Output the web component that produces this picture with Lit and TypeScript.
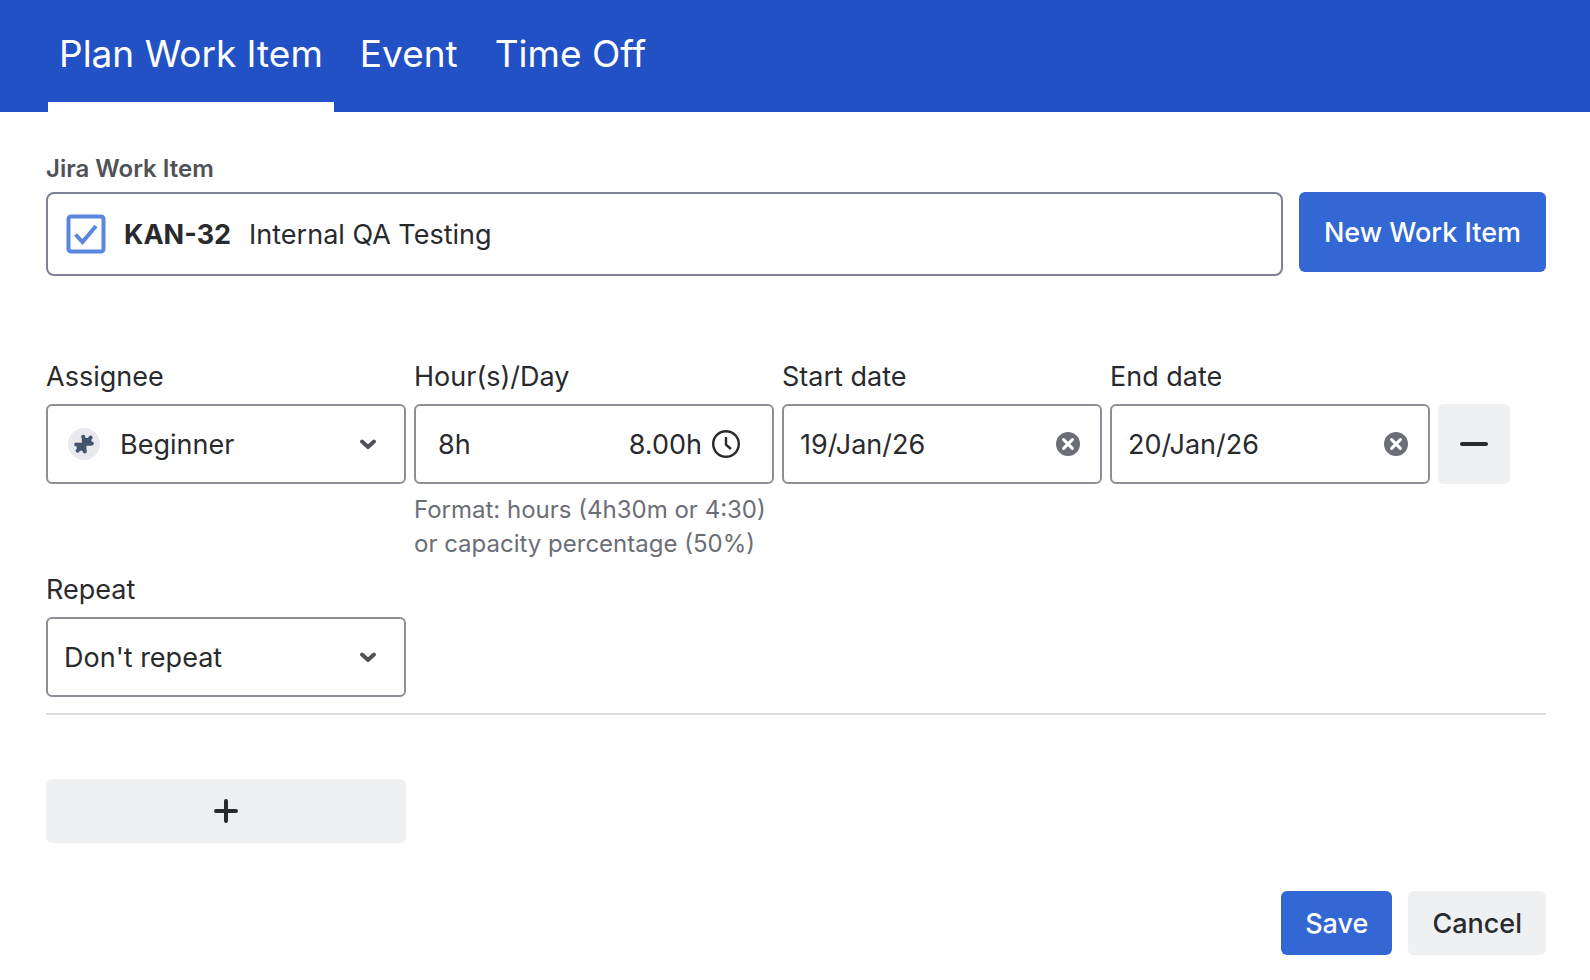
import { LitElement, html, css, svg } from "lit";
import { customElement, state } from "lit/decorators.js";

const taskIcon = html`<svg class="task-icon" viewBox="0 0 40 40" aria-hidden="true">
  <rect x="2.5" y="2.5" width="35" height="35" rx="2.5" fill="#fff" stroke="#5b86df" stroke-width="4" />
  <path d="M9.5 20.5 L16.5 28 L30 12" fill="none" stroke="#5b86df" stroke-width="4" />
</svg>`;

const chevron = html`<svg class="chevron" viewBox="0 0 20 20" aria-hidden="true">
  <path d="M4 7.5 L10 13 L16 7.5" fill="none" stroke="#505258" stroke-width="4" stroke-linecap="round" stroke-linejoin="round" />
</svg>`;

const knobs = [
  [15.2, 8.8], [22.6, 9.4], [23.8, 15.6], [8.2, 16.6], [9.6, 22.8], [16.8, 23.4],
];

const avatar = html`<svg class="avatar" viewBox="0 0 32 32" aria-hidden="true">
  <circle cx="16" cy="16" r="16" fill="#e8eaef" />
  <g fill="#44546f">
    <path d="M13.8 9.4 H23.4 V17.8 H18.4 V23.2 H8.8 V14.8 H13.8 Z" />
    ${knobs.map(([x, y]) => svg`<circle cx=${x} cy=${y} r="2" />`)}
  </g>
  <g fill="#e8eaef">
    <circle cx="19" cy="8.8" r="1.2" />
    <circle cx="13.2" cy="23.8" r="1.2" />
  </g>
</svg>`;

const clock = html`<svg class="clock" viewBox="0 0 28 28" aria-hidden="true">
  <g fill="none" stroke="#292a2e" stroke-width="2.4">
    <circle cx="14" cy="14" r="12.8" />
    <path d="M14 7 V14.6 L19 19" />
  </g>
</svg>`;

const clear = html`<svg class="clear-icon" viewBox="0 0 24 24" aria-hidden="true">
  <circle cx="12" cy="12" r="12" fill="#6b6e76" />
  <path d="M7.6 7.6 L16.4 16.4 M16.4 7.6 L7.6 16.4" stroke="#fff" stroke-width="3" stroke-linecap="round" />
</svg>`;

const minus = html`<svg class="glyph" viewBox="0 0 28 28" aria-hidden="true">
  <path d="M2 14 H26" stroke="#292a2e" stroke-width="4" stroke-linecap="round" />
</svg>`;

const plus = html`<svg class="glyph" viewBox="0 0 28 28" aria-hidden="true">
  <path d="M4 14 H24 M14 4 V24" stroke="#292a2e" stroke-width="4" stroke-linecap="round" />
</svg>`;

@customElement("app-root")
export class AppRoot extends LitElement {
  static styles = css`
    :host {
      display: block;
      min-height: 100vh;
      background: #fff;
      color: #292a2e;
      font: 400 27px/40px Inter, "Liberation Sans", sans-serif;
    }
    * {
      box-sizing: border-box;
    }
    button,
    input,
    select {
      margin: 0;
      font: inherit;
      color: inherit;
    }
    button {
      border: 0;
      border-radius: 6px;
      cursor: pointer;
    }
    svg {
      display: block;
      flex: none;
    }
    .tabs {
      display: flex;
      gap: 15px;
      padding: 0 48px;
      background: #2251c5;
    }
    .tab {
      padding: 30px 11px 24px;
      border-bottom: 10px solid transparent;
      border-radius: 0;
      background: none;
      color: #fff;
      font-size: 37px;
      line-height: 48px;
    }
    .tab.active {
      border-bottom-color: #fff;
    }
    .form {
      padding: 40px 44px 24px 46px;
    }
    .caption {
      display: block;
      margin-bottom: 6px;
      color: #505258;
      font-size: 24px;
      font-weight: 600;
      line-height: 34px;
    }
    .issue-row {
      display: flex;
      align-items: flex-start;
      gap: 16px;
      margin-bottom: 80px;
    }
    .issue {
      flex: 1;
      display: flex;
      align-items: center;
      gap: 18px;
      height: 84px;
      padding: 0 18px;
      border: 2px solid #7d8298;
      border-radius: 8px;
      background: #fff;
      text-align: left;
    }
    .issue-key,
    .issue-name {
      padding-top: 2px;
    }
    .issue-key {
      font-weight: 700;
    }
    .task-icon {
      width: 40px;
      height: 40px;
    }
    .btn {
      height: 64px;
      padding: 2px 24px 0;
      background: #eff0f2;
      font-weight: 500;
    }
    .btn.primary {
      background: #3267d4;
      color: #fff;
    }
    .btn.tall {
      height: 80px;
      padding: 2px 25px 0;
    }
    .fields {
      display: flex;
      align-items: flex-start;
      gap: 8px;
    }
    .field {
      width: 320px;
    }
    .field.wide {
      width: 360px;
    }
    .label {
      display: block;
      margin-bottom: 6px;
      line-height: 42px;
    }
    .control {
      display: flex;
      align-items: center;
      height: 80px;
      padding: 0 16px;
      border: 2px solid #8c8f97;
      border-radius: 6px;
    }
    .control input {
      flex: 1;
      min-width: 0;
      padding: 2px 0 0;
      border: 0;
      background: none;
    }
    .control.hours {
      gap: 10px;
      padding: 0 32px 0 22px;
    }
    .total {
      padding-top: 2px;
    }
    .picker {
      display: grid;
      align-items: center;
      height: 80px;
    }
    .picker > * {
      grid-area: 1 / 1;
    }
    .picker select {
      width: 100%;
      height: 100%;
      padding: 2px 56px 0 16px;
      border: 2px solid #8c8f97;
      border-radius: 6px;
      background: #fff;
      appearance: none;
    }
    .picker.with-avatar select {
      padding-left: 72px;
    }
    .avatar {
      width: 32px;
      height: 32px;
      margin-left: 22px;
      pointer-events: none;
    }
    .chevron {
      justify-self: end;
      width: 20px;
      height: 20px;
      margin-right: 28px;
      pointer-events: none;
    }
    .clock {
      width: 28px;
      height: 28px;
    }
    .clear {
      padding: 4px;
      background: none;
    }
    .clear-icon {
      width: 24px;
      height: 24px;
    }
    .glyph {
      width: 28px;
      height: 28px;
    }
    .hint {
      margin: 9px 0 8px;
      color: #6b6e76;
      font-size: 24px;
      line-height: 34px;
      white-space: nowrap;
    }
    .icon-btn {
      display: flex;
      align-items: center;
      justify-content: center;
      background: #eff0f2;
    }
    .remove {
      width: 72px;
      height: 80px;
      margin-top: 48px;
      padding: 0;
    }
    .divider {
      margin: 16px 0 64px;
      border: 0;
      border-top: 2px solid #dddee1;
    }
    .add {
      width: 360px;
      height: 64px;
    }
    .footer {
      display: flex;
      justify-content: flex-end;
      gap: 16px;
      margin-top: 48px;
    }
  `;

  @state() private activeTab = "Plan Work Item";

  private tabs = ["Plan Work Item", "Event", "Time Off"];

  private dateField(id: string, label: string, value: string) {
    return html`<div class="field">
      <label class="label" for=${id}>${label}</label>
      <div class="control">
        <input id=${id} type="text" .value=${value} />
        <button class="clear" type="button" aria-label="Clear">${clear}</button>
      </div>
    </div>`;
  }

  render() {
    return html`
      <div class="tabs" role="tablist">
        ${this.tabs.map(
          (tab) => html`<button
            class="tab ${tab === this.activeTab ? "active" : ""}"
            type="button"
            role="tab"
            aria-selected=${tab === this.activeTab}
            @click=${() => (this.activeTab = tab)}
          >${tab}</button>`
        )}
      </div>
      <form class="form" @submit=${(e: Event) => e.preventDefault()}>
        <label class="caption" for="issue">Jira Work Item</label>
        <div class="issue-row">
          <button class="issue" id="issue" type="button" aria-haspopup="listbox">
            ${taskIcon}
            <span class="issue-key">KAN-32</span>
            <span class="issue-name">Internal QA Testing</span>
          </button>
          <button class="btn primary tall" type="button">New Work Item</button>
        </div>

        <div class="fields">
          <div class="field wide">
            <label class="label" for="assignee">Assignee</label>
            <div class="picker with-avatar">
              <select id="assignee"><option>Beginner</option></select>
              ${avatar} ${chevron}
            </div>
          </div>
          <div class="field wide">
            <label class="label" for="hours">Hour(s)/Day</label>
            <div class="control hours">
              <input id="hours" type="text" aria-describedby="hours-hint" .value=${"8h"} />
              <span class="total">8.00h</span>
              ${clock}
            </div>
            <p class="hint" id="hours-hint">Format: hours (4h30m or 4:30)<br />or capacity percentage (50%)</p>
          </div>
          ${this.dateField("start", "Start date", "19/Jan/26")}
          ${this.dateField("end", "End date", "20/Jan/26")}
          <button class="icon-btn remove" type="button" aria-label="Remove row">${minus}</button>
        </div>

        <div class="field wide">
          <label class="label" for="repeat">Repeat</label>
          <div class="picker">
            <select id="repeat"><option>Don't repeat</option></select>
            ${chevron}
          </div>
        </div>
        <hr class="divider" />
        <button class="icon-btn add" type="button" aria-label="Add row">${plus}</button>

        <div class="footer">
          <button class="btn primary" type="submit">Save</button>
          <button class="btn" type="button">Cancel</button>
        </div>
      </form>
    `;
  }
}
